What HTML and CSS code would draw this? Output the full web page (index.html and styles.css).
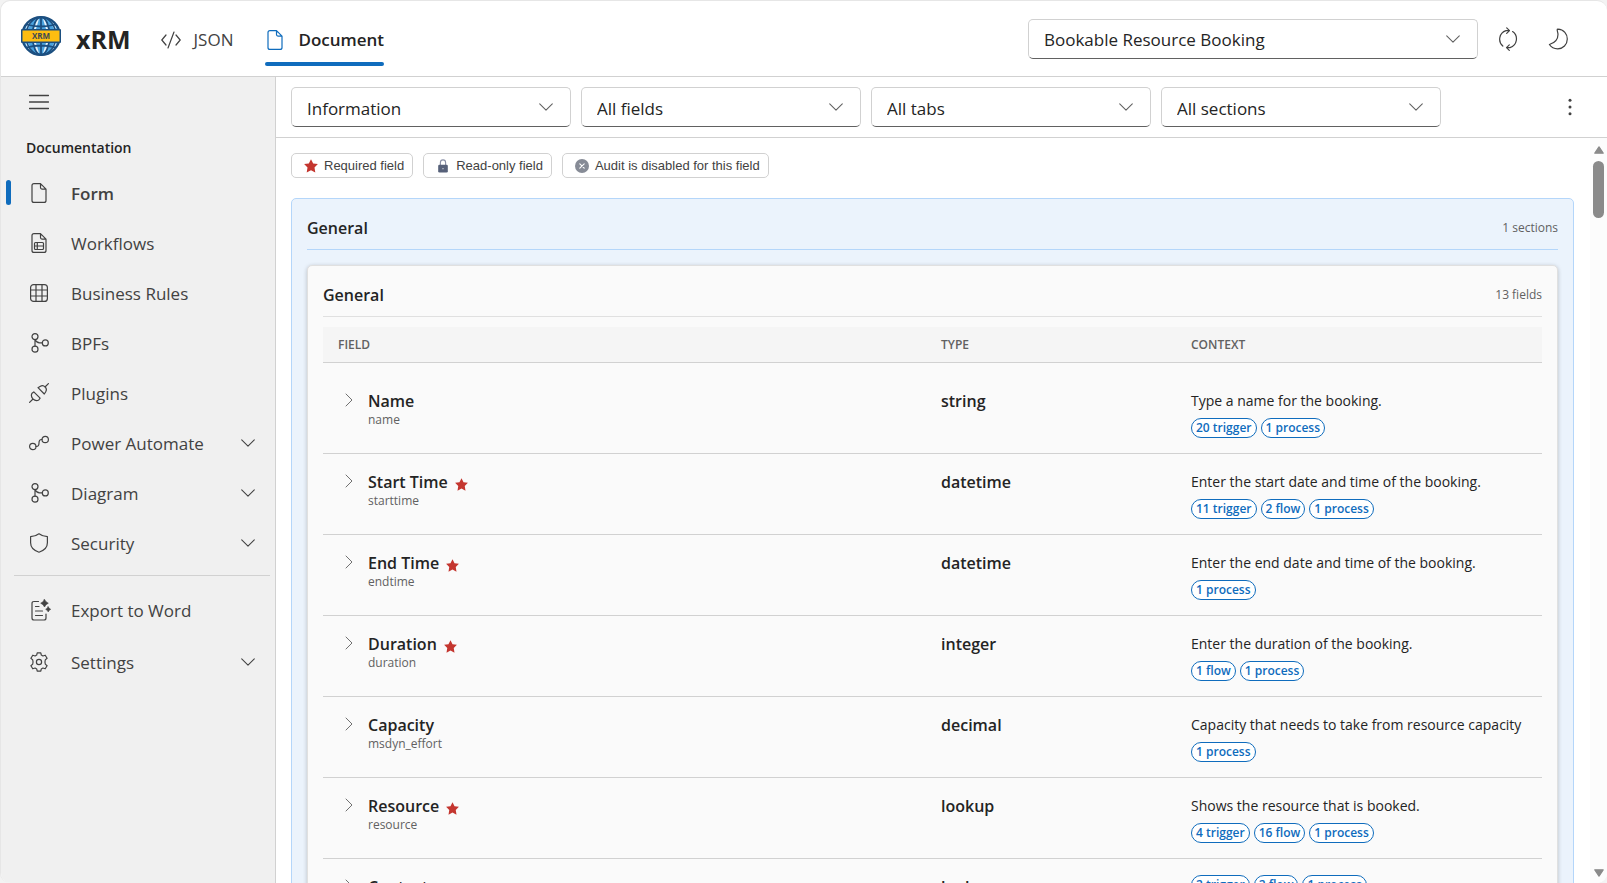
FILE: index.html
```html
<!DOCTYPE html>
<html lang="en">
<head>
<meta charset="utf-8">
<title>xRM Documentation</title>
<link rel="stylesheet" href="styles.css">
</head>
<body>
<svg class="sprite" aria-hidden="true">
  <symbol id="i-chevron" viewBox="0 0 20 20"><path d="M3 6.5 10 13.5 17 6.5"/></symbol>
  <symbol id="i-right" viewBox="0 0 12 16"><path d="M3 2 9 8 3 14"/></symbol>
  <symbol id="i-doc" viewBox="0 0 20 20"><path d="M11.5.6H5Q3 .6 3 2.6v14.8q0 2 2 2h10q2 0 2-2V6.1zM11.5.6v4q0 1.5 1.5 1.5h4"/></symbol>
  <symbol id="i-docgrid" viewBox="0 0 20 20"><path d="M11.5.6H5Q3 .6 3 2.6v14.8q0 2 2 2h10q2 0 2-2V6.1zM11.5.6v4q0 1.5 1.5 1.5h4M6.5 9.500h7q1 0 1 1v5q0 1-1 1h-7q-1 0-1-1v-5q0-1 1-1zM8.300 9.500v7M5.500 13h9"/></symbol>
  <symbol id="i-grid" viewBox="0 0 20 20"><rect x="1.600" y="1.600" width="16.800" height="16.800" rx="3"/><path d="M7 1.600v16.800M13 1.600v16.800M1.600 7h16.800M1.600 13h16.800"/></symbol>
  <symbol id="i-branch" viewBox="0 0 20 20"><circle cx="6" cy="3.600" r="3"/><circle cx="6" cy="16.200" r="3"/><circle cx="16.300" cy="9.900" r="3"/><path d="M6 6.600v6.600M6 6.600q1.500 3.300 4.600 3.300h2.700"/></symbol>
  <symbol id="i-plug" viewBox="0 0 20 20"><path d="M.6 19.400 4 16M16 4 19.400.6M9 4.700l2-1.300q3.200-1.800 5 .6 2.400 1.800.6 5L15.300 11zM4.800 8.900 11.100 15.200 9.800 17q-3 1.600-5.800-1-2.600-2.800-1-5.800z"/></symbol>
  <symbol id="i-flow" viewBox="0 0 20 20"><circle cx="3.800" cy="13.500" r="3.200"/><circle cx="16.200" cy="6.500" r="3.200"/><path d="M7 13.500h.5q2.500 0 2.500-3.500t2.500-3.500h.5"/></symbol>
  <symbol id="i-shield" viewBox="0 0 20 20"><path d="M10 .8q3.500 2.700 8.400 2.800v6.200q0 6.800-8.400 9.400-8.400-2.600-8.400-9.400V3.600Q6.500 3.500 10 .8z"/></symbol>
  <symbol id="i-export" viewBox="0 0 22 22"><path d="M9.500 2.500H5q-2 0-2 2V19q0 2 2 2h10q2 0 2-2v-4M6.500 7.500H10M6.500 12h7M6.500 16.500h7"/><path fill="currentColor" stroke-width=".6" d="M15.500.4 17 2.700 19.300 4.200 17 5.700 15.500 8 14 5.700 11.700 4.200 14 2.700zM19.200 7.700 20.200 9.300 21.700 10.300 20.200 11.300 19.200 12.900 18.200 11.300 16.700 10.300 18.200 9.300z"/></symbol>
  <symbol id="i-gear" viewBox="0 0 20 20"><circle cx="10" cy="10" r="2.600"/><path d="M8.200.8h3.600l.5 2.300 1.600.9 2.300-.8 1.900 3.100-1.800 1.600q-.7 2.100 0 4.200l1.800 1.600-1.900 3.100-2.300-.8-1.600.9-.5 2.300H8.200l-.5-2.300-1.600-.9-2.300.8-1.900-3.100 1.800-1.600q.7-2.100 0-4.200L1.900 6.300l1.900-3.100 2.300.8 1.600-.9z"/></symbol>
  <symbol id="i-star" viewBox="0 0 14 14"><path d="M7 .2 9.200 4.500 13.900 5.100 10.500 8.600 11.300 13.600 7 11.300 2.700 13.600 3.500 8.600.1 5.100 4.800 4.500z"/></symbol>
</svg>

<div class="app">
  <header class="topbar">
    <svg class="logo" viewBox="0 0 40 40" role="img" aria-label="xRM logo">
      <circle cx="20" cy="20" r="19" fill="#4aa3df"/>
      <path d="M9 6 6 12M31 6l3 6M9 34l-3-6M31 34l3-6M16.500 3.500 14 12M23.500 3.500 26 12M16.500 36.500 14 28M23.500 36.500 26 28" fill="none" stroke="#e6f3fc" stroke-width="2.600"/>
      <ellipse cx="20" cy="20" rx="8.500" ry="18.800" fill="none" stroke="#1c4f80" stroke-width="1.800"/>
      <ellipse cx="20" cy="20" rx="15" ry="18.800" fill="none" stroke="#1c4f80" stroke-width="1.600"/>
      <path d="M20 1v38M5.500 8.500q14.500 4 29 0M5.500 31.500q14.500-4 29 0" fill="none" stroke="#1c4f80" stroke-width="1.800"/>
      <circle cx="20" cy="20" r="18.900" fill="none" stroke="#1c4f80" stroke-width="2.200"/>
      <rect x="0" y="13" width="40" height="14" rx="1" fill="#1c4f80"/>
      <rect x="1.500" y="14.500" width="37" height="11" fill="#fdbd10"/>
      <text x="20" y="23" class="logo-text" text-anchor="middle">XRM</text>
    </svg>
    <span class="brand">xRM</span>
    <nav class="tabs" aria-label="Views">
      <a class="tab" href="#json"><svg class="ico" viewBox="0 0 20 20"><path d="M5 5 .8 10 5 15M15 5l4.200 5L15 15M13 2 7 18"/></svg>JSON</a>
      <a class="tab tab-active" href="#document" aria-current="page"><svg class="ico"><use href="#i-doc"/></svg>Document</a>
    </nav>
    <div class="picker picker-entity">
      <select aria-label="Entity"><option>Bookable Resource Booking</option></select>
      <svg class="chev"><use href="#i-chevron"/></svg>
    </div>
    <button class="iconbtn" type="button" aria-label="Refresh"><svg class="ico-lg" viewBox="0 0 24 24"><path d="M6.800 19A9 9 0 0 1 10 3.600h3.200M10.700.8l2.800 2.800-2.800 2.800M16.600 4.600a9 9 0 0 1-2.600 16h-3.200M13.300 17.800l-2.800 2.800 2.800 2.800"/></svg></button>
    <button class="iconbtn" type="button" aria-label="Dark mode"><svg class="ico-lg" viewBox="0 0 24 24"><path d="M11.800 2.200C18 2.500 21.300 7.300 21.300 12c0 5.500-4.300 9.800-9.600 9.800-3.600 0-6.500-1.600-8.300-4.300 5.700-1.700 8.600-4.800 8.600-10 0-2-.8-3.200-.8-4.700q0-.6.6-.6z"/></svg></button>
  </header>

  <div class="body">
    <aside class="sidebar">
      <button class="menu-btn" type="button" aria-label="Toggle menu"><svg class="ico" viewBox="0 0 20 20"><path class="bold" d="M.5 3.500h19M.5 10h19M.5 16.500h19"/></svg></button>
      <h2 class="side-title">Documentation</h2>
      <nav class="side-nav" aria-label="Documentation">
        <a class="item item-active" href="#form"><svg class="ico"><use href="#i-doc"/></svg><span>Form</span></a>
        <a class="item" href="#workflows"><svg class="ico"><use href="#i-docgrid"/></svg><span>Workflows</span></a>
        <a class="item" href="#rules"><svg class="ico"><use href="#i-grid"/></svg><span>Business Rules</span></a>
        <a class="item" href="#bpfs"><svg class="ico"><use href="#i-branch"/></svg><span>BPFs</span></a>
        <a class="item" href="#plugins"><svg class="ico"><use href="#i-plug"/></svg><span>Plugins</span></a>
        <button class="item" type="button"><svg class="ico"><use href="#i-flow"/></svg><span>Power Automate</span><svg class="chev"><use href="#i-chevron"/></svg></button>
        <button class="item" type="button"><svg class="ico"><use href="#i-branch"/></svg><span>Diagram</span><svg class="chev"><use href="#i-chevron"/></svg></button>
        <button class="item" type="button"><svg class="ico"><use href="#i-shield"/></svg><span>Security</span><svg class="chev"><use href="#i-chevron"/></svg></button>
      </nav>
      <div class="side-foot">
        <button class="item" type="button"><svg class="ico-export"><use href="#i-export"/></svg><span>Export to Word</span></button>
        <button class="item" type="button"><svg class="ico"><use href="#i-gear"/></svg><span>Settings</span><svg class="chev"><use href="#i-chevron"/></svg></button>
      </div>
    </aside>

    <main class="main">
      <div class="filters">
        <div class="picker"><select aria-label="Form"><option>Information</option></select><svg class="chev"><use href="#i-chevron"/></svg></div>
        <div class="picker"><select aria-label="Fields"><option>All fields</option></select><svg class="chev"><use href="#i-chevron"/></svg></div>
        <div class="picker"><select aria-label="Tabs"><option>All tabs</option></select><svg class="chev"><use href="#i-chevron"/></svg></div>
        <div class="picker"><select aria-label="Sections"><option>All sections</option></select><svg class="chev"><use href="#i-chevron"/></svg></div>
        <button class="iconbtn more" type="button" aria-label="More"><svg class="ico-lg" viewBox="0 0 24 24"><circle class="solid" cx="12" cy="5.200" r="1.500"/><circle class="solid" cx="12" cy="12" r="1.500"/><circle class="solid" cx="12" cy="18.800" r="1.500"/></svg></button>
      </div>

      <div class="viewport">
        <div class="content">
          <ul class="legend">
            <li><svg class="mark star"><use href="#i-star"/></svg>Required field</li>
            <li><svg class="mark" viewBox="0 0 14 16"><path d="M4 7V4.200a3 3.200 0 0 1 6 0V7" fill="none" stroke="#8a90a6" stroke-width="1.300"/><rect x="1.500" y="6.500" width="11" height="9" rx="1.500" fill="#566079"/><circle cx="7" cy="11" r=".8" fill="#d5d9e2"/></svg>Read-only field</li>
            <li><svg class="mark" viewBox="0 0 14 14"><circle cx="7" cy="7" r="7" fill="#868b96"/><path d="M4.800 4.800l4.400 4.400M9.200 4.800 4.800 9.200" fill="none" stroke="#fff" stroke-width="1.100"/></svg>Audit is disabled for this field</li>
          </ul>

          <section class="panel">
            <div class="panel-head"><h2>General</h2><span>1 sections</span></div>
            <section class="card">
              <div class="card-head"><h3>General</h3><span>13 fields</span></div>
              <table class="fields">
                <thead><tr><th class="c-field">Field</th><th class="c-type">Type</th><th class="c-context">Context</th></tr></thead>
                <tbody>
                  <tr><td><div class="field"><button type="button" aria-label="Expand Name"><svg><use href="#i-right"/></svg></button><div><strong>Name</strong><small>name</small></div></div></td><td class="type">string</td><td><p>Type a name for the booking.</p><div class="tags"><a href="#t">20 trigger</a><a href="#p">1 process</a></div></td></tr>
                  <tr><td><div class="field"><button type="button" aria-label="Expand Start Time"><svg><use href="#i-right"/></svg></button><div><strong>Start Time<svg class="star"><use href="#i-star"/></svg></strong><small>starttime</small></div></div></td><td class="type">datetime</td><td><p>Enter the start date and time of the booking.</p><div class="tags"><a href="#t">11 trigger</a><a href="#f">2 flow</a><a href="#p">1 process</a></div></td></tr>
                  <tr><td><div class="field"><button type="button" aria-label="Expand End Time"><svg><use href="#i-right"/></svg></button><div><strong>End Time<svg class="star"><use href="#i-star"/></svg></strong><small>endtime</small></div></div></td><td class="type">datetime</td><td><p>Enter the end date and time of the booking.</p><div class="tags"><a href="#p">1 process</a></div></td></tr>
                  <tr><td><div class="field"><button type="button" aria-label="Expand Duration"><svg><use href="#i-right"/></svg></button><div><strong>Duration<svg class="star"><use href="#i-star"/></svg></strong><small>duration</small></div></div></td><td class="type">integer</td><td><p>Enter the duration of the booking.</p><div class="tags"><a href="#f">1 flow</a><a href="#p">1 process</a></div></td></tr>
                  <tr><td><div class="field"><button type="button" aria-label="Expand Capacity"><svg><use href="#i-right"/></svg></button><div><strong>Capacity</strong><small>msdyn_effort</small></div></div></td><td class="type">decimal</td><td><p>Capacity that needs to take from resource capacity</p><div class="tags"><a href="#p">1 process</a></div></td></tr>
                  <tr><td><div class="field"><button type="button" aria-label="Expand Resource"><svg><use href="#i-right"/></svg></button><div><strong>Resource<svg class="star"><use href="#i-star"/></svg></strong><small>resource</small></div></div></td><td class="type">lookup</td><td><p>Shows the resource that is booked.</p><div class="tags"><a href="#t">4 trigger</a><a href="#f">16 flow</a><a href="#p">1 process</a></div></td></tr>
                  <tr><td><div class="field"><button type="button" aria-label="Expand Contact"><svg><use href="#i-right"/></svg></button><div><strong>Contact</strong><small>contact</small></div></div></td><td class="type">lookup</td><td><div class="tags"><a href="#t">2 trigger</a><a href="#f">2 flow</a><a href="#p">1 process</a></div></td></tr>
                </tbody>
              </table>
            </section>
          </section>
        </div>
        <div class="scrollbar" aria-hidden="true">
          <svg viewBox="0 0 10 8"><path d="M5 .8 9.200 7.200H.8z"/></svg>
          <div class="thumb"></div>
          <svg class="down" viewBox="0 0 10 8"><path d="M.8.8h8.400L5 7.200z"/></svg>
        </div>
      </div>
    </main>
  </div>
</div>
</body>
</html>
```

FILE: styles.css
```css
* { box-sizing: border-box; }
body {
  margin: 0;
  background: #f3f3f3;
  color: #242424;
  font-family: "Open Sans", "Noto Sans", sans-serif;
  font-size: 17px;
}
h2, h3, p, ul { margin: 0; padding: 0; }
a { color: inherit; text-decoration: none; }
button, select { font: inherit; color: inherit; background: none; border: 0; padding: 0; }
svg { flex: none; fill: none; stroke: currentColor; stroke-width: 1.2; stroke-linecap: round; stroke-linejoin: round; }
.sprite { display: none; }
.solid { fill: currentColor; stroke: none; }
.bold { stroke-width: 1.4; }
.ico { width: 20px; height: 20px; }
.ico-lg { width: 24px; height: 24px; }
.ico-export { width: 22px; height: 22px; }
.chev { width: 18px; height: 18px; }

.app {
  display: flex;
  flex-direction: column;
  height: 100vh;
  overflow: hidden;
  background: #fff;
  border: 1px solid #e6e6e6;
  border-right: 0;
  border-bottom: 0;
  border-radius: 10px;
}

/* Top bar */
.topbar {
  display: flex;
  align-items: center;
  flex: none;
  height: 76px;
  padding: 0 37px 0 20px;
  border-bottom: 1px solid #d1d1d1;
}
.logo { width: 40px; height: 40px; margin-bottom: 6px; stroke: none; }
.logo-text { font: 700 8px "Open Sans", sans-serif; fill: #3d4a52; }
.brand { margin: 0 0 0 15px; font-size: 25px; font-weight: 700; }
.tabs { display: flex; gap: 32px; height: 52px; margin: 2px auto 0 30px; }
.tab { display: flex; align-items: center; gap: 13px; color: #424242; }
.tab-active { position: relative; color: #242424; font-weight: 600; }
.tab-active::after { content: ""; position: absolute; inset: auto 0 0; height: 4px; border-radius: 2px; background: #0f6cbd; }
.tab-active .ico { color: #0f6cbd; }
.iconbtn { display: grid; place-items: center; width: 24px; height: 24px; color: #424242; }
.topbar .iconbtn { margin-left: 26px; }
.topbar .picker-entity { width: 450px; margin-right: -8px; }

.picker { display: grid; align-items: center; width: 280px; height: 40px; color: #242424; }
.picker > * { grid-area: 1 / 1; }
.picker select {
  appearance: none;
  width: 100%;
  height: 40px;
  padding: 2px 44px 0 15px;
  background: #fff;
  border: 1px solid #d1d1d1;
  border-bottom-color: #616161;
  border-radius: 5px;
}
.picker .chev { justify-self: end; margin-right: 16px; color: #616161; pointer-events: none; }

/* Sidebar */
.body { display: flex; flex: 1; min-height: 0; }
.sidebar { flex: none; width: 275px; padding-top: 13px; background: #f0f0f0; border-right: 1px solid #d1d1d1; color: #424242; }
.menu-btn { display: flex; margin-left: 28px; padding: 2px 0; }
.side-title { margin: 22px 0 8px 25px; font-size: 14px; line-height: 24px; font-weight: 600; color: #242424; }
.item { position: relative; display: flex; align-items: center; width: 100%; height: 50px; padding: 0 18px 0 28px; text-align: left; }
.item span { flex: 1; margin-left: 22px; }
.item .ico-export { margin-right: -2px; }
.item-active { font-weight: 600; }
.item-active::before { content: ""; position: absolute; left: 5px; top: 12px; width: 5px; height: 25px; border-radius: 3px; background: #0f6cbd; }
.side-foot { margin: 7px 5px 0 13px; padding-top: 8px; border-top: 1px solid #d1d1d1; }
.side-foot .item { height: 52px; padding: 0 13px 0 15px; }

/* Main area */
.main { display: flex; flex-direction: column; flex: 1; min-width: 0; }
.filters { display: flex; align-items: center; gap: 10px; flex: none; height: 61px; padding: 0 25px 0 15px; border-bottom: 1px solid #d1d1d1; }
.more { margin-left: auto; }
.viewport { display: flex; flex: 1; min-height: 0; overflow: hidden; }
.content { flex: 1; min-width: 0; padding: 15px 16px 0 15px; overflow: hidden; }
.legend { display: flex; gap: 10px; list-style: none; font: 13px/23px "Liberation Sans", Arial, sans-serif; color: #424242; }
.legend li { display: flex; align-items: center; gap: 6px; padding: 0 8px 0 12px; border: 1px solid #d1d1d1; border-radius: 5px; }
.mark { width: 14px; height: 14px; stroke: none; }
.star { fill: #c4362f; stroke: none; }

.panel { margin-top: 20px; padding: 15px; background: #ebf3fc; border: 1px solid #b4d6fa; border-radius: 5px; }
.panel-head, .card-head { display: flex; justify-content: space-between; align-items: center; line-height: 28px; }
.panel-head { padding-bottom: 7px; border-bottom: 1px solid #b4d6fa; }
.card-head { padding-bottom: 7px; border-bottom: 1px solid #e0e0e0; }
.panel h2, .card h3 { font-size: 16px; font-weight: 600; }
.panel-head span, .card-head span { font-size: 12px; line-height: 26px; color: #616161; }
.card { margin-top: 15px; padding: 15px; background: #fafafa; border: 1px solid #e0e0e0; border-radius: 5px; box-shadow: 0 1px 4px rgba(0, 0, 0, .22); }

.fields { width: 100%; margin-top: 10px; border-collapse: separate; border-spacing: 0; table-layout: fixed; }
.fields th { height: 36px; padding: 0 15px; text-align: left; text-transform: uppercase; font-size: 12px; font-weight: 600; color: #616161; background: #f5f5f5; border-bottom: 1px solid #d1d1d1; }
.c-type { width: 250px; }
.c-context { width: 366px; }
.fields td { padding: 16px 15px 15px; vertical-align: top; border-bottom: 1px solid #d1d1d1; }
.fields tr:first-child td { padding-top: 26px; }
.field { display: flex; gap: 13px; padding-left: 5px; }
.field button { display: flex; width: 12px; height: 16px; margin-top: 3px; color: #707070; }
.field button svg { width: 12px; height: 16px; stroke-width: 1; }
.field strong { display: flex; align-items: center; gap: 7px; font-size: 16px; font-weight: 600; line-height: 24px; }
.field strong .star { width: 13px; height: 13px; margin-top: 4px; }
.field small { display: block; font-size: 12px; line-height: 14px; color: #616161; }
.fields .type { font-size: 16px; font-weight: 600; line-height: 24px; }
.fields p { margin-bottom: 5px; font-size: 14px; line-height: 24px; white-space: nowrap; }
.tags { display: flex; gap: 4px; }
.tags a { padding: 0 4px; border: 1px solid #0f6cbd; border-radius: 10px; background: #fff; color: #0f6cbd; font-size: 12px; font-weight: 600; line-height: 18px; }

.scrollbar { display: flex; flex-direction: column; align-items: center; flex: none; width: 17px; padding: 8px 0 6px; background: #fcfcfc; }
.scrollbar svg { width: 10px; height: 8px; fill: #8a8a8a; stroke: #8a8a8a; }
.thumb { width: 11px; height: 57px; margin-top: 7px; border-radius: 6px; background: #8a8a8a; }
.down { margin-top: auto; }
```
